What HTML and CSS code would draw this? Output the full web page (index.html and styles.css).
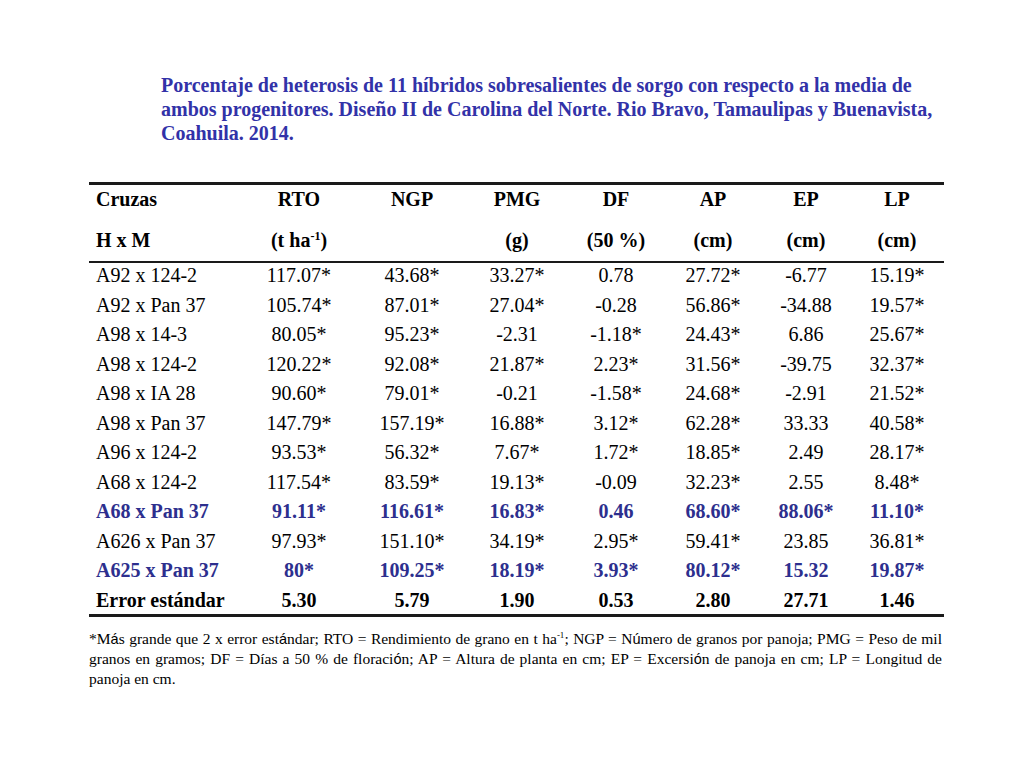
FILE: index.html
```html
<!DOCTYPE html>
<html lang="es">
<head>
<meta charset="utf-8">
<title>Porcentaje de heterosis</title>
<link rel="stylesheet" href="styles.css">
</head>
<body>
<div class="page">
  <h1 class="title">Porcentaje de heterosis de 11 híbridos sobresalientes de sorgo con respecto a la media de<br>ambos progenitores. Diseño II de Carolina del Norte. Rio Bravo, Tamaulipas y Buenavista,<br>Coahuila. 2014.</h1>
  <table class="data">
    <colgroup>
      <col class="c0"><col class="c1"><col class="c2"><col class="c3"><col class="c4"><col class="c5"><col class="c6"><col class="c7">
    </colgroup>
    <thead>
      <tr class="h1">
        <th class="first">Cruzas</th><th>RTO</th><th>NGP</th><th>PMG</th><th>DF</th><th>AP</th><th>EP</th><th>LP</th>
      </tr>
      <tr class="h2">
        <th class="first">H x M</th><th>(t ha<sup>-1</sup>)</th><th></th><th>(g)</th><th>(50 %)</th><th>(cm)</th><th>(cm)</th><th>(cm)</th>
      </tr>
    </thead>
    <tbody>
      <tr><td class="first">A92 x 124-2</td><td>117.07*</td><td>43.68*</td><td>33.27*</td><td>0.78</td><td>27.72*</td><td>-6.77</td><td>15.19*</td></tr>
      <tr><td class="first">A92 x Pan 37</td><td>105.74*</td><td>87.01*</td><td>27.04*</td><td>-0.28</td><td>56.86*</td><td>-34.88</td><td>19.57*</td></tr>
      <tr><td class="first">A98 x 14-3</td><td>80.05*</td><td>95.23*</td><td>-2.31</td><td>-1.18*</td><td>24.43*</td><td>6.86</td><td>25.67*</td></tr>
      <tr><td class="first">A98 x 124-2</td><td>120.22*</td><td>92.08*</td><td>21.87*</td><td>2.23*</td><td>31.56*</td><td>-39.75</td><td>32.37*</td></tr>
      <tr><td class="first">A98 x IA 28</td><td>90.60*</td><td>79.01*</td><td>-0.21</td><td>-1.58*</td><td>24.68*</td><td>-2.91</td><td>21.52*</td></tr>
      <tr><td class="first">A98 x Pan 37</td><td>147.79*</td><td>157.19*</td><td>16.88*</td><td>3.12*</td><td>62.28*</td><td>33.33</td><td>40.58*</td></tr>
      <tr><td class="first">A96 x 124-2</td><td>93.53*</td><td>56.32*</td><td>7.67*</td><td>1.72*</td><td>18.85*</td><td>2.49</td><td>28.17*</td></tr>
      <tr><td class="first">A68 x 124-2</td><td>117.54*</td><td>83.59*</td><td>19.13*</td><td>-0.09</td><td>32.23*</td><td>2.55</td><td>8.48*</td></tr>
      <tr class="hl"><td class="first">A68 x Pan 37</td><td>91.11*</td><td>116.61*</td><td>16.83*</td><td>0.46</td><td>68.60*</td><td>88.06*</td><td>11.10*</td></tr>
      <tr><td class="first">A626 x Pan 37</td><td>97.93*</td><td>151.10*</td><td>34.19*</td><td>2.95*</td><td>59.41*</td><td>23.85</td><td>36.81*</td></tr>
      <tr class="hl"><td class="first">A625 x Pan 37</td><td>80*</td><td>109.25*</td><td>18.19*</td><td>3.93*</td><td>80.12*</td><td>15.32</td><td>19.87*</td></tr>
      <tr class="err"><td class="first">Error estándar</td><td>5.30</td><td>5.79</td><td>1.90</td><td>0.53</td><td>2.80</td><td>27.71</td><td>1.46</td></tr>
    </tbody>
  </table>
  <p class="note">*M<span class="alt">á</span>s grande que 2 x error est<span class="alt">á</span>ndar; RTO = Rendimiento de grano en t ha<sup>-1</sup>; NGP = N<span class="alt">ú</span>mero de granos por panoja; PMG = Peso de mil granos en gramos; DF = Días a 50 % de floraci<span class="alt">ó</span>n; AP = Altura de planta en cm; EP = Excersi<span class="alt">ó</span>n de panoja en cm; LP = Longitud de panoja en cm.</p>
</div>
</body>
</html>
```

FILE: styles.css
```css
html, body {
  margin: 0;
  padding: 0;
  background: #ffffff;
}

body {
  font-family: "Liberation Serif", "Times New Roman", serif;
  color: #000000;
}

.page {
  width: 1024px;
  height: 768px;
  box-sizing: border-box;
  padding: 73px 0 0 89px;
}

.title {
  margin: 0 0 0 72px;
  font-size: 20px;
  line-height: 24px;
  font-weight: bold;
  color: #3232a8;
}

.data {
  margin-top: 37px;
  width: 855px;
  border-collapse: collapse;
  table-layout: fixed;
  font-size: 20px;
  border-top: 3px solid #1a1a1a;
  border-bottom: 3px solid #1a1a1a;
}

.c0 { width: 151px; }
.c1 { width: 118px; }
.c2 { width: 108px; }
.c3 { width: 102px; }
.c4 { width: 96px; }
.c5 { width: 98px; }
.c6 { width: 88px; }
.c7 { width: 94px; }

.data th,
.data td {
  padding: 0;
  text-align: center;
  white-space: nowrap;
}

.data .first {
  text-align: left;
  padding-left: 7px;
}

.data thead th {
  font-weight: bold;
  line-height: 24px;
}

.h1 th {
  padding-top: 2px;
  padding-bottom: 3px;
}

.h2 th {
  padding-top: 14px;
  padding-bottom: 9px;
  border-bottom: 2px solid #1a1a1a;
}

.data sup {
  font-size: 12px;
  line-height: 0;
  vertical-align: 7px;
}

.data tbody td {
  line-height: 25.5px;
  padding-bottom: 4px;
}

.hl td {
  color: #2d2f8e;
  font-weight: bold;
}

.data tbody .err td {
  font-weight: bold;
  line-height: 23px;
  padding-top: 1px;
  padding-bottom: 2px;
}

.note {
  margin: 12px 0 0 0;
  width: 853px;
  font-size: 15.5px;
  line-height: 19px;
  text-align: justify;
}

.note sup {
  font-size: 9px;
  line-height: 0;
  vertical-align: baseline;
  position: relative;
  top: -6px;
}

.alt {
  font-family: "Liberation Sans", Arial, sans-serif;
  font-size: 14.5px;
}
```
